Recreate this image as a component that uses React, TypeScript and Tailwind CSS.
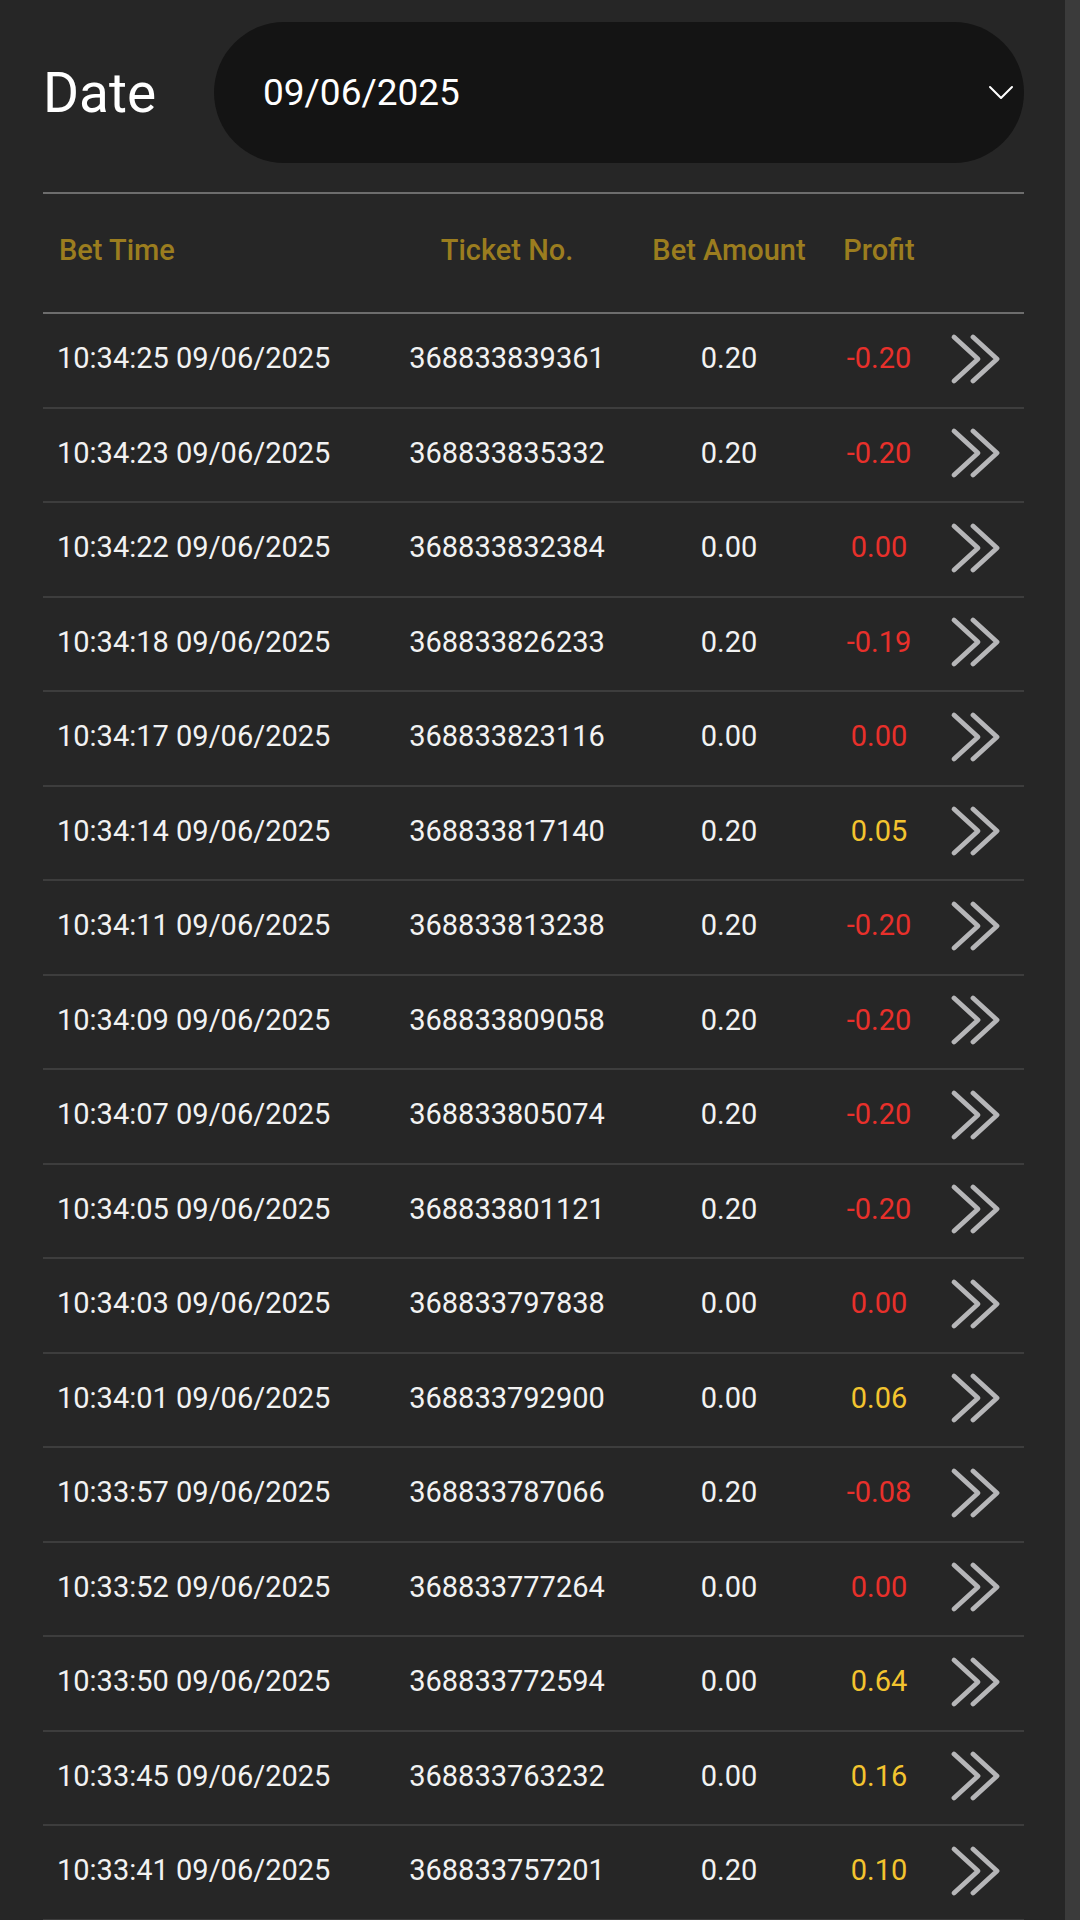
import React from "react";

interface BetRow {
  time: string;
  ticket: string;
  amount: string;
  profit: string;
}

const rows: BetRow[] = [
  { time: "10:34:25", ticket: "368833839361", amount: "0.20", profit: "-0.20" },
  { time: "10:34:23", ticket: "368833835332", amount: "0.20", profit: "-0.20" },
  { time: "10:34:22", ticket: "368833832384", amount: "0.00", profit: "0.00" },
  { time: "10:34:18", ticket: "368833826233", amount: "0.20", profit: "-0.19" },
  { time: "10:34:17", ticket: "368833823116", amount: "0.00", profit: "0.00" },
  { time: "10:34:14", ticket: "368833817140", amount: "0.20", profit: "0.05" },
  { time: "10:34:11", ticket: "368833813238", amount: "0.20", profit: "-0.20" },
  { time: "10:34:09", ticket: "368833809058", amount: "0.20", profit: "-0.20" },
  { time: "10:34:07", ticket: "368833805074", amount: "0.20", profit: "-0.20" },
  { time: "10:34:05", ticket: "368833801121", amount: "0.20", profit: "-0.20" },
  { time: "10:34:03", ticket: "368833797838", amount: "0.00", profit: "0.00" },
  { time: "10:34:01", ticket: "368833792900", amount: "0.00", profit: "0.06" },
  { time: "10:33:57", ticket: "368833787066", amount: "0.20", profit: "-0.08" },
  { time: "10:33:52", ticket: "368833777264", amount: "0.00", profit: "0.00" },
  { time: "10:33:50", ticket: "368833772594", amount: "0.00", profit: "0.64" },
  { time: "10:33:45", ticket: "368833763232", amount: "0.00", profit: "0.16" },
  { time: "10:33:41", ticket: "368833757201", amount: "0.20", profit: "0.10" }
];

const DATE = "09/06/2025";

// grid columns: time | ticket | amount | profit | detail arrow
const COLS = "grid grid-cols-[364px_200px_244px_56px_1fr] items-center";

const DoubleChevron = (): JSX.Element => (
  <svg width="50" height="52" viewBox="0 0 50 52" fill="none">
    <polyline
      points="4,4 28,26 4,48"
      stroke="#b6b6b8"
      strokeWidth="4.8"
      strokeLinecap="round"
      strokeLinejoin="round"
    />
    <polyline
      points="23,4 47,26 23,48"
      stroke="#b6b6b8"
      strokeWidth="4.8"
      strokeLinecap="round"
      strokeLinejoin="round"
    />
  </svg>
);

const Row = ({ row }: { row: BetRow }): JSX.Element => {
  const positive = parseFloat(row.profit) > 0;
  return (
    <div
      className={`${COLS} h-[94.5px] border-b-2 border-[#3d3d3d] pb-[3px] text-[29px] text-[#f2f2f2]`}
    >
      <div className="pl-[14px] whitespace-nowrap">
        {row.time} {DATE}
      </div>
      <div className="flex justify-center whitespace-nowrap">{row.ticket}</div>
      <div className="flex justify-center whitespace-nowrap">{row.amount}</div>
      <div
        className={`flex justify-center whitespace-nowrap ${
          positive ? "text-[#f3c42f]" : "text-[#e8302b]"
        }`}
      >
        {row.profit}
      </div>
      <div className="flex pl-[43px]">
        <DoubleChevron />
      </div>
    </div>
  );
};

const App = (): JSX.Element => {
  return (
    <div
      className="flex min-h-[1920px] w-full bg-[#262626]"
      style={{ fontFamily: "Roboto, 'Noto Sans', sans-serif" }}
    >
      <div className="flex-1 pl-[43px] pr-[41px] pt-[22px]">
        <div className="flex items-center">
          <div className="w-[171px] pt-[2px] text-[55px] leading-none text-white">
            Date
          </div>
          <div className="flex h-[141px] flex-1 items-center justify-between rounded-full bg-[#141414] pl-[49px] pr-[10px]">
            <span className="text-[37px] text-white">{DATE}</span>
            <svg width="26" height="16" viewBox="0 0 26 16" fill="none">
              <polyline
                points="2,2 13,13 24,2"
                stroke="#ffffff"
                strokeWidth="2"
                strokeLinecap="round"
                strokeLinejoin="round"
              />
            </svg>
          </div>
        </div>

        <div className="mt-[29px] border-t-2 border-[#6d6d6d]">
          <div
            className={`${COLS} h-[120px] border-b-2 border-[#6d6d6d] pb-[4px] text-[29px] font-medium text-[#9b7d1f]`}
          >
            <div className="pl-[16px] whitespace-nowrap">Bet Time</div>
            <div className="flex justify-center whitespace-nowrap">
              Ticket No.
            </div>
            <div className="flex justify-center whitespace-nowrap">
              Bet Amount
            </div>
            <div className="flex justify-center whitespace-nowrap">Profit</div>
            <div />
          </div>
          {rows.map((row) => (
            <Row key={row.ticket} row={row} />
          ))}
        </div>
      </div>
      <div className="w-[15px] bg-[#3b3b3b]" />
    </div>
  );
};

export default App;
